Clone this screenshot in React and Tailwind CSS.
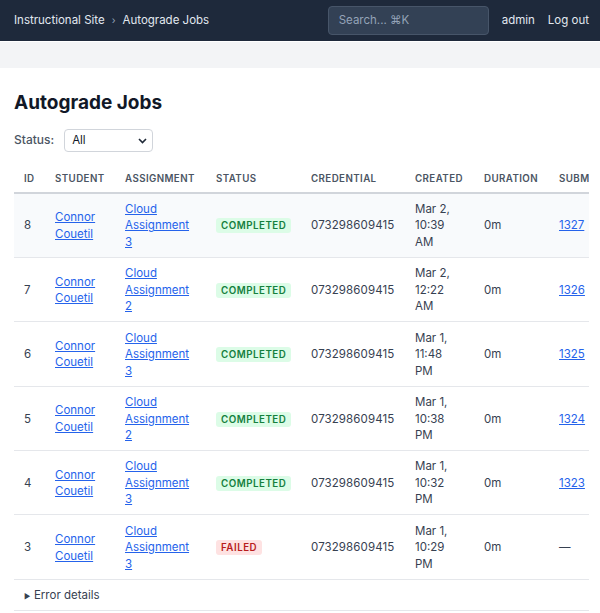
const jobs = [
  { id: 8, assignment: 'Cloud Assignment 3', status: 'COMPLETED', date: 'Mar 2,', time: '10:39', ampm: 'AM', submission: '1327' },
  { id: 7, assignment: 'Cloud Assignment 2', status: 'COMPLETED', date: 'Mar 2,', time: '12:22', ampm: 'AM', submission: '1326' },
  { id: 6, assignment: 'Cloud Assignment 3', status: 'COMPLETED', date: 'Mar 1,', time: '11:48', ampm: 'PM', submission: '1325' },
  { id: 5, assignment: 'Cloud Assignment 2', status: 'COMPLETED', date: 'Mar 1,', time: '10:38', ampm: 'PM', submission: '1324' },
  { id: 4, assignment: 'Cloud Assignment 3', status: 'COMPLETED', date: 'Mar 1,', time: '10:32', ampm: 'PM', submission: '1323' },
  { id: 3, assignment: 'Cloud Assignment 3', status: 'FAILED', date: 'Mar 1,', time: '10:29', ampm: 'PM', submission: null },
]

function Badge({ status }) {
  if (status === 'FAILED') {
    return <span className="inline-block rounded-[3px] bg-[#fee2e2] px-[5px] text-[9.75px] leading-[15px] font-semibold tracking-[0.5px] text-[#b91c1c]">{status}</span>
  }
  return <span className="inline-block rounded-[3px] bg-[#dcfce7] px-[5px] text-[9.75px] leading-[15px] font-semibold tracking-[0.5px] text-[#15803d]">{status}</span>
}

export default function App() {
  const th = 'h-[26px] px-[10px] text-left text-[9.75px] font-semibold tracking-[0.4px] text-[#4b5563] whitespace-nowrap'
  const td = 'px-[10px] pt-[7.45px] pb-[6.45px] align-middle'
  const link = 'text-[#2563eb] underline'

  return (
    <div className="h-[613px] overflow-hidden bg-white font-['Inter',sans-serif] text-[11.5px] leading-[16.5px] text-[#374151]">
      <nav className="flex h-[41px] items-center justify-between bg-[#1e293b] pr-[11px] pl-[14px] text-[#e2e8f0]">
        <div className="flex items-center">
          <span>Instructional Site</span>
          <span className="mx-[7px] text-[10px] text-[#94a3b8]">›</span>
          <span>Autograde Jobs</span>
        </div>
        <div className="flex items-center">
          <div className="flex h-[29px] w-[161px] items-center rounded-[4px] border border-[#475569] bg-[#334155] px-[10px] text-[#94a3b8]">Search... ⌘K</div>
          <span className="ml-[13px]">admin</span>
          <span className="ml-[13px]">Log out</span>
        </div>
      </nav>
      <div className="mt-px h-[26px] bg-[#f3f4f6]"></div>
      <main className="px-[14px]">
        <h1 className="mt-[23px] text-[19px] leading-[24px] font-bold text-[#111827]">Autograde Jobs</h1>
        <div className="mt-[14px] flex h-[23px] items-center">
          <span className="text-[12px] font-medium text-[#4b5563]">Status:</span>
          <div className="relative ml-[10px] flex h-[23px] w-[89px] items-center rounded-[4px] border border-[#d1d5db] bg-white pl-[7px] text-[#111827]">
            All
            <svg className="absolute top-[8px] right-[5px]" width="9" height="6" viewBox="0 0 9 6" fill="none" stroke="#1f2937" strokeWidth="1.6"><path d="M1 1l3.5 3.5L8 1" /></svg>
          </div>
        </div>
        <div className="mt-[14.5px] w-[575px] overflow-hidden">
          <table className="w-[660px] table-fixed border-collapse">
            <thead>
              <tr className="border-b-2 border-[#d1d5db]">
                <th className={`${th} w-[31px]`}>ID</th>
                <th className={`${th} w-[70px]`}>STUDENT</th>
                <th className={`${th} w-[91px]`}>ASSIGNMENT</th>
                <th className={`${th} w-[95px]`}>STATUS</th>
                <th className={`${th} w-[104px]`}>CREDENTIAL</th>
                <th className={`${th} w-[69px]`}>CREATED</th>
                <th className={`${th} w-[75px]`}>DURATION</th>
                <th className={`${th} w-[125px]`}>SUBMISSION</th>
              </tr>
            </thead>
            <tbody>
              {jobs.map((job, i) => (
                <tr key={job.id} className={`border-b border-[#e5e7eb] ${i === 0 ? 'bg-[#f8fafc]' : ''}`}>
                  <td className={td}>{job.id}</td>
                  <td className={td}><a className={link}>Connor Couetil</a></td>
                  <td className={td}><a className={link}>{job.assignment}</a></td>
                  <td className={td}><Badge status={job.status} /></td>
                  <td className={`${td} tracking-[0.1px]`}>073298609415</td>
                  <td className={td}><div className="w-[40px]">{job.date} {job.time} {job.ampm}</div></td>
                  <td className={td}>0m</td>
                  <td className={td}>{job.submission ? <a className={link}>{job.submission}</a> : '—'}</td>
                </tr>
              ))}
              <tr className="h-[31px] border-b border-[#e5e7eb]">
                <td colSpan={8} className="px-[10px] pt-[2px]"><span className="mr-[3.5px] text-[7px]">▶</span>Error details</td>
              </tr>
            </tbody>
          </table>
        </div>
      </main>
    </div>
  )
}
